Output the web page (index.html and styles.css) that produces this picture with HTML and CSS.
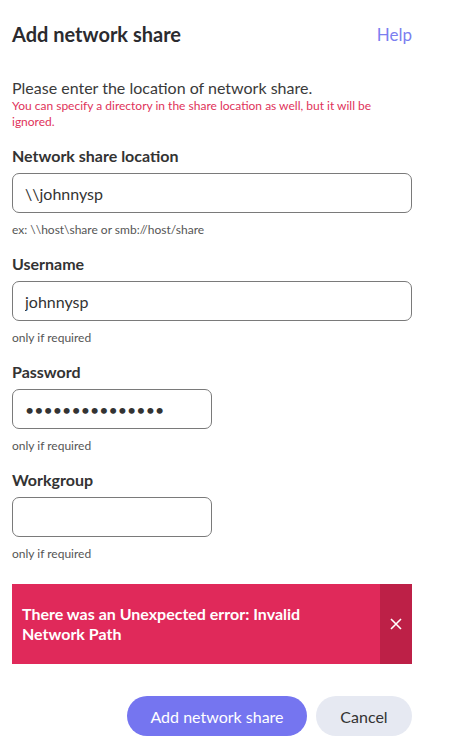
FILE: index.html
```html
<!DOCTYPE html>
<html>
    <head>
        <title>Add network share</title>
        <meta name="viewport" content="width=device-width, initial-scale=1.0">
        <link rel="stylesheet" href="styles.css">
    </head>
    <body>
        <div class="dialog">
            <div class="header">
                <h1>Add network share</h1>
                <a class="help" href="#">Help</a>
            </div>

            <p class="intro">Please enter the location of network share.</p>
            <p class="warning">You can specify a directory in the share location as well, but it will be ignored.</p>

            <div class="field">
                <label for="location">Network share location</label>
                <input type="text" id="location" value="\\johnnysp">
                <span class="hint">ex: \\host\share or smb://host/share</span>
            </div>

            <div class="field">
                <label for="username">Username</label>
                <input type="text" id="username" value="johnnysp">
                <span class="hint">only if required</span>
            </div>

            <div class="field">
                <label for="password">Password</label>
                <input type="password" id="password" class="short" value="secretpassword1">
                <span class="hint">only if required</span>
            </div>

            <div class="field">
                <label for="workgroup">Workgroup</label>
                <input type="text" id="workgroup" class="short">
                <span class="hint">only if required</span>
            </div>

            <div class="error">
                <div class="error-text">There was an Unexpected error: Invalid Network Path</div>
                <button class="error-close" aria-label="Close">
                    <svg width="12" height="12" viewBox="0 0 12 12">
                        <path d="M1 1L11 11M11 1L1 11" stroke="#fff" stroke-width="1.6" fill="none"/>
                    </svg>
                </button>
            </div>

            <div class="actions">
                <button class="btn primary">Add network share</button>
                <button class="btn secondary">Cancel</button>
            </div>
        </div>
    </body>
</html>
```

FILE: styles.css
```css
body {
    margin: 0;
    background-color: #fff;
    font-family: Lato, "Open Sans", sans-serif;
    color: #333;
}

.dialog {
    width: 400px;
    margin-left: 12px;
}

.header {
    display: flex;
    justify-content: space-between;
    align-items: center;
    padding-top: 22px;
}

h1 {
    margin: 0;
    font-size: 20px;
    line-height: 24px;
    font-weight: 700;
    color: #2b2b2f;
}

.help {
    font-size: 17px;
    color: #7b7ff0;
    text-decoration: none;
}

.intro {
    margin: 32px 0 0;
    font-size: 16px;
    line-height: 20px;
    color: #3a3a3a;
}

.warning {
    margin: 0;
    font-size: 12px;
    line-height: 16px;
    color: #e0325a;
}

.field {
    display: flex;
    flex-direction: column;
    align-items: flex-start;
    margin-top: 16px;
}

.field label {
    font-size: 16px;
    line-height: 20px;
    font-weight: 700;
    color: #333;
    margin-bottom: 7px;
}

input {
    box-sizing: border-box;
    width: 400px;
    height: 40px;
    padding: 0 12px;
    border: 1px solid #7a7a7a;
    border-radius: 7px;
    font-family: inherit;
    font-size: 16px;
    color: #333;
    outline: none;
}

input.short {
    width: 200px;
}

.hint {
    margin-top: 9px;
    font-size: 12px;
    line-height: 16px;
    color: #555;
}

.error {
    display: flex;
    margin-top: 22px;
    height: 80px;
    background-color: #e0295a;
}

.error-text {
    flex: 1;
    align-self: center;
    padding: 0 24px 0 10px;
    font-size: 16px;
    line-height: 20px;
    font-weight: 700;
    color: #fff;
}

.error-close {
    width: 32px;
    border: none;
    background-color: #bd2047;
    display: flex;
    align-items: center;
    justify-content: center;
    padding: 0;
    cursor: pointer;
}

.actions {
    display: flex;
    justify-content: flex-end;
    gap: 9px;
    margin-top: 32px;
}

.btn {
    height: 40px;
    border: none;
    border-radius: 20px;
    font-family: inherit;
    font-size: 16px;
    cursor: pointer;
}

.primary {
    width: 180px;
    background-color: #7575f0;
    color: #fff;
}

.secondary {
    width: 96px;
    background-color: #e6e9f2;
    color: #333;
}
```
